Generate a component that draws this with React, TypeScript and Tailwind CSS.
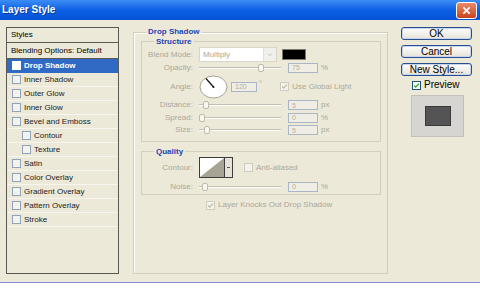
import clsx from "clsx";

const styleItems = [
    { label: "Drop Shadow", indent: false, selected: true },
    { label: "Inner Shadow", indent: false },
    { label: "Outer Glow", indent: false },
    { label: "Inner Glow", indent: false },
    { label: "Bevel and Emboss", indent: false },
    { label: "Contour", indent: true },
    { label: "Texture", indent: true },
    { label: "Satin", indent: false },
    { label: "Color Overlay", indent: false },
    { label: "Gradient Overlay", indent: false },
    { label: "Pattern Overlay", indent: false },
    { label: "Stroke", indent: false },
];

type Tone = "list" | "sel" | "off" | "on";

const Tick = ({ color }: { color: string }) => (
    <svg viewBox="0 0 9 9" className="h-[7px] w-[7px]">
        <path d="M1.5 4.5 L3.5 6.6 L7.6 2" fill="none" stroke={color} strokeWidth="1.6" />
    </svg>
);

const Box = ({ tone, checked = false }: { tone: Tone; checked?: boolean }) => (
    <span
        className={clsx(
            "flex h-[9px] w-[9px] shrink-0 items-center justify-center border",
            tone === "list" && "border-[#8fa3b9] bg-[#f3f2ec]",
            tone === "sel" && "border-white bg-white",
            tone === "off" && "border-[#cfccbe] bg-[#f3f2ec]",
            tone === "on" && "border-[#1c5180] bg-white"
        )}
    >
        {checked && <Tick color={tone === "on" ? "#21a121" : "#bdbaa9"} />}
    </span>
);

const Slider = ({ at }: { at: number }) => (
    <div className="relative h-[10px] w-[82px] shrink-0">
        <div className="absolute left-0 right-0 top-[4px] h-[2px] border-t border-[#c2bfb0] bg-white" />
        <div
            className="absolute top-[1px] h-[8px] w-[6px] rounded-[2px] border border-[#bdbaab] bg-[#f8f7f2]"
            style={{ left: at }}
        />
    </div>
);

const Field = ({ value, w = "w-[30px]" }: { value: string; w?: string }) => (
    <div className={clsx("flex h-[10px] shrink-0 items-center border border-[#a9b6c6] bg-[#efede4] pl-[3px] text-[7px] text-[#b3b09f]", w)}>
        {value}
    </div>
);

const Label = ({ text }: { text: string }) => (
    <span className="w-[57px] shrink-0 pr-[6px] text-right text-[#aca899]">{text}</span>
);

const SliderRow = ({ label, at, value, unit, h }: { label: string; at: number; value: string; unit: string; h: string }) => (
    <div className={clsx("flex items-center", h)}>
        <Label text={label} />
        <Slider at={at} />
        <div className="ml-[7px]">
            <Field value={value} />
        </div>
        <span className="ml-[3px] text-[#aca899]">{unit}</span>
    </div>
);

const Button = ({ text }: { text: string }) => (
    <button className="flex h-[13px] w-[71px] items-center justify-center rounded-[3px] border border-[#2a4f8f] bg-gradient-to-b from-white to-[#e6e3d6] text-[10px] leading-none text-black shadow-[inset_0_0_0_1px_#c6d4ee]">
        {text}
    </button>
);

export default function App() {
    return (
        <div className="flex h-[289px] w-[480px] flex-col bg-white font-['Liberation_Sans',Arial,sans-serif] text-[8px] leading-none">
            {/* Title bar */}
            <div className="flex h-[20px] shrink-0 items-center justify-between bg-gradient-to-b from-[#3c8df5] via-[#0b5fe3] to-[#0652d6] pl-[2px] pr-[3px]">
                <span className="text-[10px] font-bold text-white [text-shadow:1px_1px_0_#0a3a99]">Layer Style</span>
                <div className="flex h-[17px] w-[21px] items-center justify-center rounded-[3px] border border-white bg-gradient-to-b from-[#e98a6a] to-[#c8411b]">
                    <svg viewBox="0 0 10 10" className="h-[9px] w-[9px]">
                        <path d="M1.5 1.5 L8.5 8.5 M8.5 1.5 L1.5 8.5" stroke="white" strokeWidth="1.8" />
                    </svg>
                </div>
            </div>

            {/* Body */}
            <div className="flex h-[263px] shrink-0 items-start border-b border-[#8593d8] bg-[#ece9d8]">
                {/* Styles list */}
                <div className="ml-[6px] mt-[7px] flex h-[247px] w-[113px] flex-col border border-[#5b5a52]">
                    <div className="flex h-[15px] items-center border-b border-[#5b5a52] pl-[4px] text-black">Styles</div>
                    <div className="flex h-[16px] items-center border-b border-[#5b5a52] pl-[4px] text-black">Blending Options: Default</div>
                    {styleItems.map((item) => (
                        <div
                            key={item.label}
                            className={clsx(
                                "flex h-[14px] items-center gap-[3px] border-b",
                                item.indent ? "pl-[15px]" : "pl-[5px]",
                                item.selected ? "border-[#316ac5] bg-[#316ac5] font-bold text-white" : "border-[#f6f5ef] text-[#222]"
                            )}
                        >
                            <Box tone={item.selected ? "sel" : "list"} />
                            <span>{item.label}</span>
                        </div>
                    ))}
                </div>

                {/* Drop Shadow group */}
                <fieldset className="ml-[14px] mt-[7px] h-[247px] w-[255px] border border-[#d2cfbf] px-0 shadow-[inset_1px_1px_0_#fff]">
                    <legend className="ml-[12px] px-[2px] text-[8px] font-bold leading-[10px] text-[#1d44b3]">Drop Shadow</legend>

                    <fieldset className="ml-[7px] h-[105px] w-[240px] border border-[#d2cfbf] p-0">
                        <legend className="ml-[12px] px-[2px] font-bold leading-[9px] text-[#1d44b3]">Structure</legend>

                        <div className="mt-[1px] flex h-[15px] items-center">
                            <Label text="Blend Mode:" />
                            <div className="flex h-[15px] w-[78px] border border-[#d8d6ca] bg-white">
                                <span className="flex flex-1 items-center pl-[3px] text-[#aca899]">Multiply</span>
                                <span className="flex w-[13px] items-center justify-center border-l border-[#e3e1d6] bg-[#f1f0ea]">
                                    <svg viewBox="0 0 8 6" className="h-[4px] w-[6px]">
                                        <path d="M1 1 L4 4 L7 1" fill="none" stroke="#c4c1b4" strokeWidth="1.4" />
                                    </svg>
                                </span>
                            </div>
                            <div className="ml-[5px] h-[11px] w-[24px] border border-[#7c7a70] bg-black" />
                        </div>

                        <SliderRow label="Opacity:" at={59} value="75" unit="%" h="h-[11px]" />

                        <div className="mt-[2px] flex h-[23px] items-center">
                            <Label text="Angle:" />
                            <svg viewBox="0 0 29 24" className="h-[24px] w-[29px] shrink-0">
                                <ellipse cx="14.5" cy="12" rx="13.5" ry="11" fill="white" stroke="#a6a394" />
                                <line x1="14.5" y1="12" x2="7" y2="3.5" stroke="#111" strokeWidth="1.2" />
                                <circle cx="14.5" cy="12" r="1" fill="#111" />
                            </svg>
                            <div className="ml-[3px]">
                                <Field value="120" w="w-[26px]" />
                            </div>
                            <span className="ml-[2px] self-start pt-[5px] text-[#aca899]">°</span>
                            <div className="ml-[18px] flex items-center gap-[3px]">
                                <Box tone="off" checked />
                                <span className="text-[#aca899]">Use Global Light</span>
                            </div>
                        </div>

                        <div className="mt-[1px]">
                            <SliderRow label="Distance:" at={4} value="5" unit="px" h="h-[12px]" />
                            <SliderRow label="Spread:" at={0} value="0" unit="%" h="h-[13px]" />
                            <SliderRow label="Size:" at={5} value="5" unit="px" h="h-[12px]" />
                        </div>
                    </fieldset>

                    <fieldset className="ml-[7px] mt-[5px] h-[48px] w-[240px] border border-[#d2cfbf] p-0">
                        <legend className="ml-[12px] px-[2px] font-bold leading-[9px] text-[#1d44b3]">Quality</legend>

                        <div className="mt-[1px] flex h-[21px] items-center">
                            <Label text="Contour:" />
                            <div className="flex h-[21px] w-[34px] shrink-0 border border-[#3c3c3c] bg-white">
                                <svg viewBox="0 0 24 19" preserveAspectRatio="none" className="h-full w-[24px]">
                                    <polygon points="0,19 24,0 24,19" fill="#a7a395" />
                                </svg>
                                <span className="flex w-[8px] items-center justify-center border-l border-[#3c3c3c] bg-[#e6e3d6]">
                                    <span className="h-[1px] w-[3px] bg-[#555]" />
                                </span>
                            </div>
                            <div className="ml-[11px] flex items-center gap-[3px]">
                                <Box tone="off" />
                                <span className="text-[#aca899]">Anti-aliased</span>
                            </div>
                        </div>

                        <div className="mt-[3px]">
                            <SliderRow label="Noise:" at={3} value="0" unit="%" h="h-[11px]" />
                        </div>
                    </fieldset>

                    <div className="ml-[72px] mt-[5px] flex h-[10px] items-center gap-[3px]">
                        <Box tone="off" checked />
                        <span className="text-[#aca899]">Layer Knocks Out Drop Shadow</span>
                    </div>
                </fieldset>

                {/* Buttons */}
                <div className="ml-[13px] mt-[7px] flex w-[71px] flex-col">
                    <Button text="OK" />
                    <div className="mt-[5px]">
                        <Button text="Cancel" />
                    </div>
                    <div className="mt-[5px]">
                        <Button text="New Style..." />
                    </div>
                    <div className="ml-[11px] mt-[4px] flex h-[10px] items-center gap-[3px]">
                        <Box tone="on" checked />
                        <span className="text-[10px] text-black">Preview</span>
                    </div>
                    <div className="ml-[10px] mt-[5px] flex h-[42px] w-[53px] items-center justify-center border border-[#c2c0b8] bg-[#d6d5d2]">
                        <div className="h-[20px] w-[26px] border border-[#3a3a3a] bg-[#545454]" />
                    </div>
                </div>
            </div>
        </div>
    );
}
